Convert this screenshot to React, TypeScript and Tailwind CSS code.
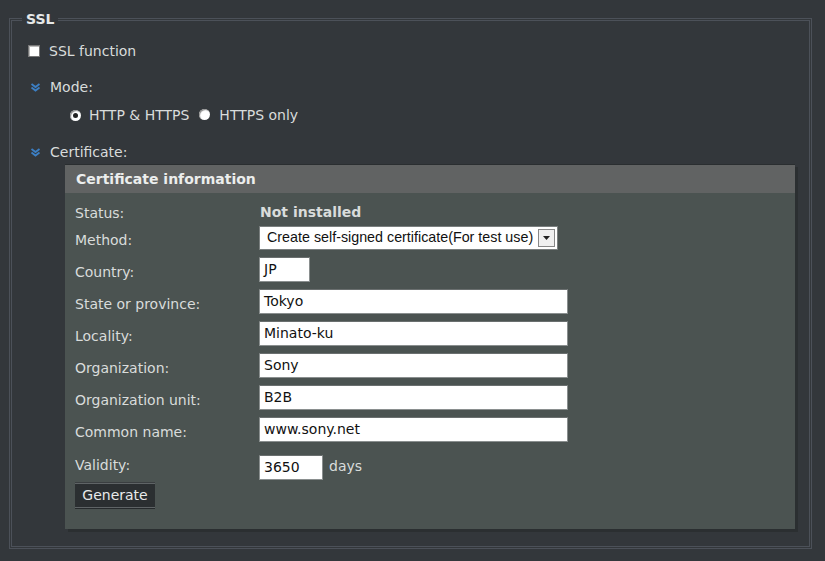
import React from "react";

const Chevron = () => (
  <svg width="11" height="9" viewBox="0 0 11 9" className="shrink-0">
    <path d="M1.5 1 L5.5 4 L9.5 1" stroke="#3c7fc4" strokeWidth="1.8" fill="none" />
    <path d="M1.5 4.5 L5.5 7.5 L9.5 4.5" stroke="#3c7fc4" strokeWidth="1.8" fill="none" />
  </svg>
);

const Radio = ({ checked }: { checked?: boolean }) => (
  <span className="inline-flex h-[11px] w-[11px] items-center justify-center rounded-full bg-white shadow-[inset_1px_1px_1px_#888]">
    {checked && <span className="h-[5px] w-[5px] rounded-full bg-[#222]" />}
  </span>
);

const Field = ({ value, w }: { value: string; w: string }) => (
  <div
    className={`${w} h-[25px] -ml-[1px] flex items-center bg-white border border-[#8a8f8f] border-t-[#6a6f6f] pl-[4px] text-[14px] text-[#111]`}
  >
    {value}
  </div>
);

const Row = ({ label, children, cls }: { label: string; children: React.ReactNode; cls: string }) => (
  <div className={`flex items-center ${cls}`}>
    <span className="w-[185px] pt-[5px]">{label}</span>
    {children}
  </div>
);

export default function App() {
  return (
    <div
      className="w-[825px] h-[561px] bg-[#33373b] pt-[6px] text-[#d9dcdb] text-[14px] overflow-hidden"
      style={{ fontFamily: '"DejaVu Sans", Verdana, sans-serif' }}
    >
      <fieldset className="ml-[9px] w-[803px] h-[543px] border-[3px] border-double border-[#4c5159] pl-[16px] pr-[12px]">
        <legend className="-ml-[6px] px-[4px] font-bold text-[14px] text-[#e6e8e8] leading-[26px]">SSL</legend>
        <div className="flex items-center mt-[9px] h-[20px]">
          <span className="w-[12px] h-[12px] bg-white border border-[#777] shadow-[inset_1px_1px_0_#bbb]" />
          <span className="ml-[9px]">SSL function</span>
        </div>
        <div className="flex items-center mt-[16px] h-[20px] pl-[2px]">
          <Chevron />
          <span className="ml-[9px]">Mode:</span>
        </div>
        <div className="flex items-center mt-[9px] h-[18px] pl-[42px]">
          <Radio checked />
          <span className="ml-[8px]">HTTP &amp; HTTPS</span>
          <span className="ml-[10px]">
            <Radio />
          </span>
          <span className="ml-[9px]">HTTPS only</span>
        </div>
        <div className="flex items-center mt-[19px] h-[18px] pl-[2px]">
          <Chevron />
          <span className="ml-[9px]">Certificate:</span>
        </div>
        <div className="ml-[37px] mt-[3px] w-[730px] h-[365px] bg-[#4b5351] shadow-[3px_3px_0_#2b2f31] border-t border-[#2a2e30]">
          <div className="h-[28px] bg-[#616363] flex items-center pl-[11px] font-bold text-[#eceeed]">
            Certificate information
          </div>
          <div className="pl-[10px] pt-[6px]">
            <Row label="Status:" cls="h-[24px]">
              <span className="font-bold pt-[3px]">Not installed</span>
            </Row>
            <Row label="Method:" cls="h-[24px] mt-[3px]">
              <div className="w-[299px] h-[24px] -ml-[1px] bg-white border border-[#7a7f7f] flex items-center pl-[7px] pr-[2px] text-[14.3px] text-[#111]" style={{ fontFamily: '"Liberation Sans", Arial, sans-serif' }}>
                <span className="flex-1 whitespace-nowrap">Create self-signed certificate(For test use)</span>
                <span className="w-[17px] h-[18px] border border-[#888] bg-[#f0f0f0] flex items-center justify-center shrink-0">
                  <svg width="7" height="4" viewBox="0 0 7 4"><path d="M0 0 L7 0 L3.5 4 Z" fill="#222" /></svg>
                </span>
              </div>
            </Row>
            <Row label="Country:" cls="h-[25px] mt-[7px]">
              <Field value="JP" w="w-[51px]" />
            </Row>
            <Row label="State or province:" cls="h-[25px] mt-[7px]">
              <Field value="Tokyo" w="w-[309px]" />
            </Row>
            <Row label="Locality:" cls="h-[25px] mt-[7px]">
              <Field value="Minato-ku" w="w-[309px]" />
            </Row>
            <Row label="Organization:" cls="h-[25px] mt-[7px]">
              <Field value="Sony" w="w-[309px]" />
            </Row>
            <Row label="Organization unit:" cls="h-[25px] mt-[7px]">
              <Field value="B2B" w="w-[309px]" />
            </Row>
            <Row label="Common name:" cls="h-[25px] mt-[7px]">
              <Field value="www.sony.net" w="w-[309px]" />
            </Row>
            <div className="flex items-center h-[25px] mt-[13px]">
              <span className="w-[185px] -mt-[4px]">Validity:</span>
              <Field value="3650" w="w-[64px]" />
              <span className="ml-[6px] -mt-[2px]">days</span>
            </div>
            <div className="mt-[3px] w-[80px] h-[25px] bg-[#2b2f31] border-y border-[#5f6466] shadow-[0_1px_0_#262a2c,0_-1px_0_#3a3e40] flex items-center justify-center text-[#e8eaea]">
              Generate
            </div>
          </div>
        </div>
      </fieldset>
    </div>
  );
}
